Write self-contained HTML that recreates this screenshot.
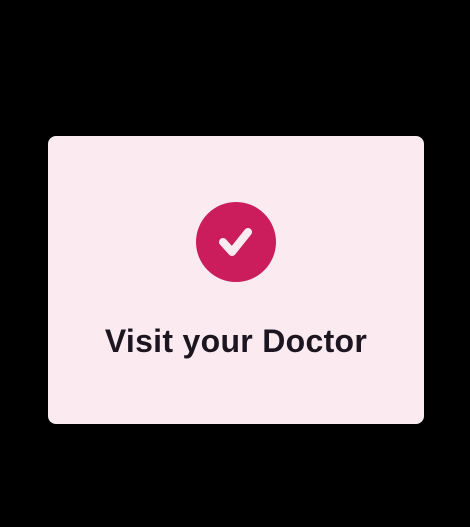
<!DOCTYPE html>
<html><head><style>
html,body{margin:0;padding:0;background:#000;width:470px;height:527px;overflow:hidden}
.card{position:absolute;left:48px;top:136px;width:376px;height:288px;background:#fbeaf0;border-radius:8px}
.c{position:absolute;left:196px;top:202px;width:80px;height:80px;border-radius:50%;background:#cb1c5c}
.t{position:absolute;left:0;width:472px;top:323px;text-align:center;font:bold 32px "Liberation Sans",sans-serif;color:#1c1620;letter-spacing:0.3px}
</style></head><body>
<div class="card"></div>
<div class="c"><svg width="80" height="80" viewBox="0 0 80 80"><path d="M27 40 L36 50 L52 30" fill="none" stroke="#fbeaf0" stroke-width="8" stroke-linecap="round" stroke-linejoin="round"/></svg></div>
<div class="t">Visit your Doctor</div>
</body></html>
